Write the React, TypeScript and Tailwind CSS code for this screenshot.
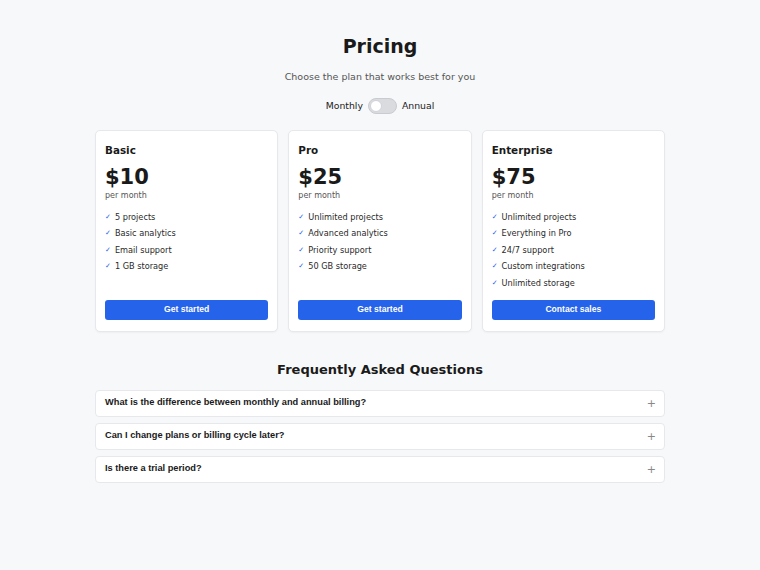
import React from "react";

const plans = [
  { name: "Basic", price: "$10", features: ["5 projects", "Basic analytics", "Email support", "1 GB storage"], cta: "Get started" },
  { name: "Pro", price: "$25", features: ["Unlimited projects", "Advanced analytics", "Priority support", "50 GB storage"], cta: "Get started" },
  { name: "Enterprise", price: "$75", features: ["Unlimited projects", "Everything in Pro", "24/7 support", "Custom integrations", "Unlimited storage"], cta: "Contact sales" },
];

const faqs = [
  "What is the difference between monthly and annual billing?",
  "Can I change plans or billing cycle later?",
  "Is there a trial period?",
];

export default function App() {
  return (
    <div
      className="min-h-screen w-full bg-[#f7f8fa] text-[#1a1a1a]"
      style={{ fontFamily: '"DejaVu Sans", sans-serif' }}
    >
      <div className="mx-auto flex w-[570px] flex-col items-center pt-[34px] pb-[40px]">
        <h1 className="text-[19px] font-bold leading-[24px]">Pricing</h1>
        <p className="mt-[12px] text-[9.5px] leading-[14px] text-[#555]">Choose the plan that works best for you</p>
        <div className="mt-[14px] flex h-[16px] items-center gap-[5px] text-[9.3px] text-[#222]">
          <span>Monthly</span>
          <div className="relative h-[16px] w-[29px] rounded-full border border-[#c8cbd0] bg-[#d9dbdf]">
            <div className="absolute left-[1px] top-[1px] h-[12px] w-[12px] rounded-full border border-[#d0d3d8] bg-white" />
          </div>
          <span>Annual</span>
        </div>

        <div className="mt-[16px] grid w-full grid-cols-3 gap-[10px]">
          {plans.map((p) => (
            <div
              key={p.name}
              className="flex flex-col rounded-[5px] border border-[#e6e8eb] bg-white px-[9px] pt-[12px] pb-[11px] shadow-[0_1px_2px_rgba(0,0,0,0.04)]"
            >
              <div className="text-[10.4px] font-bold leading-[14px]">{p.name}</div>
              <div className="mt-[8px] text-[21px] font-bold leading-[24px]">{p.price}</div>
              <div className="mt-[2px] text-[8px] leading-[10px] text-[#555]">per month</div>
              <ul className="mt-[10px] mb-[11px] flex flex-col gap-[4.4px]">
                {p.features.map((f) => (
                  <li key={f} className="flex items-center text-[8.2px] leading-[12px] text-[#2a2a2a]">
                    <span className="mr-[4px] text-[7px] text-[#2563eb]">✓</span>
                    {f}
                  </li>
                ))}
              </ul>
              <button
                className="mt-auto h-[20px] w-full rounded-[3px] bg-[#2563eb] text-[8.6px] font-bold text-white"
                style={{ fontFamily: '"Liberation Sans", Arial, sans-serif' }}
              >
                {p.cta}
              </button>
            </div>
          ))}
        </div>

        <h2 className="mt-[29px] text-[13px] font-bold leading-[18px]">Frequently Asked Questions</h2>
        <div className="mt-[11px] flex w-full flex-col gap-[6px]">
          {faqs.map((q) => (
            <div
              key={q}
              className="flex h-[27px] items-center justify-between rounded-[4px] border border-[#e6e8eb] bg-white pl-[9px] pr-[8px]"
            >
              <span
                className="text-[9.25px] font-bold text-[#1a1a1a]"
                style={{ fontFamily: '"Liberation Sans", Arial, sans-serif' }}
              >
                {q}
              </span>
              <span className="text-[11px] leading-none text-[#888]">+</span>
            </div>
          ))}
        </div>
      </div>
    </div>
  );
}
